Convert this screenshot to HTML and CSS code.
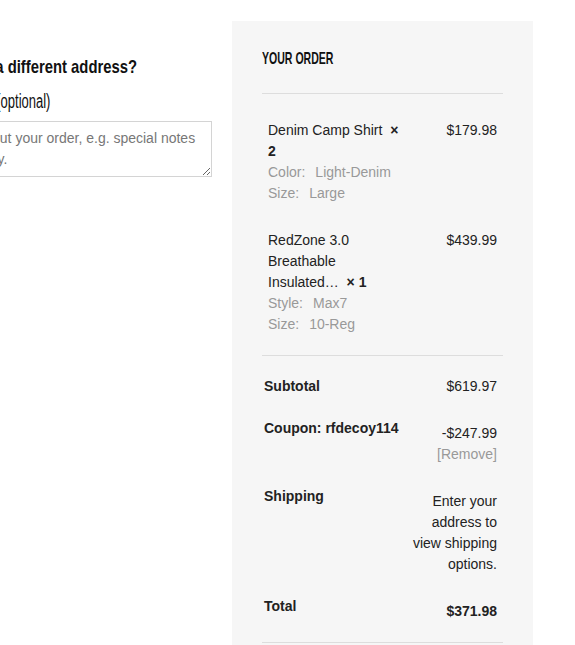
FILE: index.html
```html
<!DOCTYPE html>
<html lang="en">
<head>
<meta charset="utf-8">
<title>Checkout</title>
<link rel="stylesheet" href="styles.css">
</head>
<body>
<div class="checkout">
  <div class="col-fields">
    <h3 class="ship-heading"><label><input type="checkbox" class="ship-check"><span class="condensed">Ship to a different address?</span></label></h3>
    <div class="notes-field">
      <label class="notes-label"><span class="condensed">Order notes (optional)</span></label>
      <textarea class="notes-input" placeholder="Notes about your order, e.g. special notes for delivery."></textarea>
    </div>
  </div>
  <aside class="order-review">
    <h3 class="order-title"><span class="condensed">Your order</span></h3>
    <div class="order-items">
      <div class="cart-item">
        <div class="item-name">Denim Camp Shirt&nbsp; <strong class="qty">× 2</strong>
          <dl class="variation">
            <div class="variation-row"><dt>Color:</dt><dd>Light-Denim</dd></div>
            <div class="variation-row"><dt>Size:</dt><dd>Large</dd></div>
          </dl>
        </div>
        <div class="item-price">$179.98</div>
      </div>
      <div class="cart-item">
        <div class="item-name">RedZone 3.0 Breathable Insulated…&nbsp; <strong class="qty">× 1</strong>
          <dl class="variation">
            <div class="variation-row"><dt>Style:</dt><dd>Max7</dd></div>
            <div class="variation-row"><dt>Size:</dt><dd>10-Reg</dd></div>
          </dl>
        </div>
        <div class="item-price">$439.99</div>
      </div>
    </div>
    <div class="order-totals">
      <div class="total-row first">
        <div class="total-label">Subtotal</div>
        <div class="total-value">$619.97</div>
      </div>
      <div class="total-row offset">
        <div class="total-label">Coupon: rfdecoy114</div>
        <div class="total-value">-$247.99<br><a class="remove-coupon" href="#">[Remove]</a></div>
      </div>
      <div class="total-row offset">
        <div class="total-label">Shipping</div>
        <div class="total-value">Enter your address to view shipping options.</div>
      </div>
      <div class="total-row offset last">
        <div class="total-label">Total</div>
        <div class="total-value grand">$371.98</div>
      </div>
    </div>
  </aside>
</div>
</body>
</html>
```
FILE: styles.css
```css
html, body {
  margin: 0;
  padding: 0;
  background: #ffffff;
  overflow: hidden;
}

body {
  font-family: "Liberation Sans", Arial, sans-serif;
  font-size: 14px;
  line-height: 21px;
  color: #222222;
}

.checkout {
  display: flex;
  align-items: flex-start;
  gap: 20px;
}

/* condensed display face, approximated by a horizontally compressed sans */
.condensed {
  display: inline-block;
  transform-origin: left center;
  white-space: nowrap;
}

/* Left column (clipped by the window edge) */
.col-fields {
  flex: 0 0 288px;
  margin-left: -76px;
  padding-top: 55px;
}

.ship-heading {
  margin: 0 0 10px;
  font-family: "Liberation Sans", Arial, sans-serif;
  font-size: 19px;
  font-weight: 700;
  line-height: 24px;
  color: #111111;
  white-space: nowrap;
}

.ship-heading .condensed {
  transform: scaleX(0.78);
}

.ship-check {
  margin: 0 0 0 4px;
  width: 13px;
  height: 13px;
  vertical-align: -1px;
}

.notes-field {
  margin: 0;
}

.notes-label {
  display: block;
  margin-bottom: 8px;
  font-family: "Liberation Sans", Arial, sans-serif;
  font-size: 20px;
  line-height: 24px;
  color: #111111;
}

.notes-label .condensed {
  transform: scaleX(0.65);
}

.notes-input {
  display: block;
  box-sizing: border-box;
  width: 100%;
  height: 56px;
  margin: 0;
  padding: 6px 11px;
  border: 1px solid #d4d4d4;
  border-radius: 0;
  background: #ffffff;
  font-family: "Liberation Sans", Arial, sans-serif;
  font-size: 14px;
  line-height: 21px;
  color: #222222;
}

.notes-input::placeholder {
  color: #777777;
}

/* Order review panel */
.order-review {
  flex: 0 0 301px;
  box-sizing: border-box;
  margin-top: 21px;
  padding: 28px 30px 40px;
  background: #f6f6f6;
}

.order-title {
  margin: 0 0 24px;
  font-family: "Liberation Sans", Arial, sans-serif;
  font-size: 17px;
  font-weight: 700;
  line-height: 20px;
  text-transform: uppercase;
  color: #111111;
}

.order-title .condensed {
  transform: scaleX(0.62);
}

.order-items {
  border-top: 1px solid #dddddd;
  border-bottom: 1px solid #dddddd;
  padding-bottom: 20px;
}

.cart-item {
  display: flex;
  justify-content: space-between;
  padding: 26px 6px 0;
}

.item-name {
  width: 136px;
}

.qty {
  font-weight: 700;
}

.item-price {
  text-align: right;
}

.variation {
  margin: 0;
  color: #999999;
}

.variation-row {
  display: flex;
}

.variation dt {
  margin: 0;
}

.variation dd {
  margin: 0 0 0 10px;
}

.order-totals {
  border-bottom: 1px solid #dddddd;
}

.total-row {
  display: flex;
  justify-content: space-between;
  align-items: flex-start;
  padding-top: 21px;
}

.total-row.first {
  padding-top: 20px;
}

.total-row.last {
  padding-bottom: 20px;
}

.total-label {
  padding-left: 2px;
  font-weight: 700;
}

.total-value {
  width: 90px;
  padding-right: 6px;
  text-align: right;
}

.total-row.offset .total-value {
  padding-top: 5px;
}

.total-value.grand {
  font-weight: 700;
}

.remove-coupon {
  color: #999999;
  text-decoration: none;
}
```
